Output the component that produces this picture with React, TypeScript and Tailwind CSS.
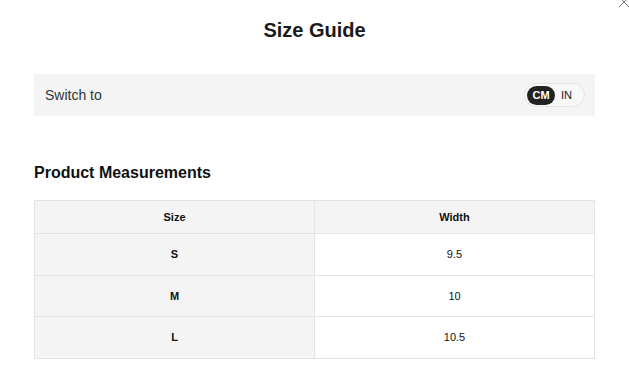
import React from "react";

const rows = [
  { size: "S", width: "9.5" },
  { size: "M", width: "10" },
  { size: "L", width: "10.5" },
];

const CloseIcon: React.FC = () => (
  <svg
    width="12"
    height="12"
    viewBox="0 0 12 12"
    className="absolute left-[618px] top-[-4px]"
    fill="none"
    stroke="#777"
    strokeWidth="1"
  >
    <path d="M1 1 L11 11 M11 1 L1 11" />
  </svg>
);

const UnitToggle: React.FC = () => {
  return (
    <div className="flex items-center h-[24px] w-[61px] rounded-full border border-[#e4e4e4] bg-[#f8f8f8] px-[2px]">
      <span className="flex items-center justify-center h-[19px] w-[28px] rounded-full bg-[#222] text-white text-[11px] font-bold">
        CM
      </span>
      <span className="flex-1 text-center text-[11px] font-medium text-[#222] pr-[4px]">
        IN
      </span>
    </div>
  );
};

export default function App() {
  return (
    <div
      className="relative w-[629px] h-[366px] overflow-hidden bg-white px-[34px]"
      style={{ fontFamily: '"Liberation Sans", Arial, sans-serif' }}
    >
      <CloseIcon />

      <h1 className="pt-[19px] text-center text-[20px] leading-[23px] font-extrabold text-[#1a1a1a]">
        Size Guide
      </h1>

      <div className="mt-[32px] flex items-center justify-between h-[42px] bg-[#f4f4f4] pl-[11px] pr-[10px]">
        <span className="text-[14px] text-[#333]">Switch to</span>
        <UnitToggle />
      </div>

      <h2 className="mt-[48px] text-[16px] leading-[18px] font-bold text-[#111]">
        Product Measurements
      </h2>

      <table className="mt-[18px] w-[561px] table-fixed border-collapse text-[11px] text-[#111]">
        <thead>
          <tr className="h-[33px] bg-[#f4f4f4]">
            <th className="border border-[#e3e3e3] font-bold">Size</th>
            <th className="border border-[#e3e3e3] font-bold">Width</th>
          </tr>
        </thead>
        <tbody>
          {rows.map((row) => (
            <tr key={row.size} className="h-[41.7px]">
              <td className="border border-[#e3e3e3] bg-[#f4f4f4] text-center font-bold">
                {row.size}
              </td>
              <td className="border border-[#e3e3e3] text-center">{row.width}</td>
            </tr>
          ))}
        </tbody>
      </table>
    </div>
  );
}
